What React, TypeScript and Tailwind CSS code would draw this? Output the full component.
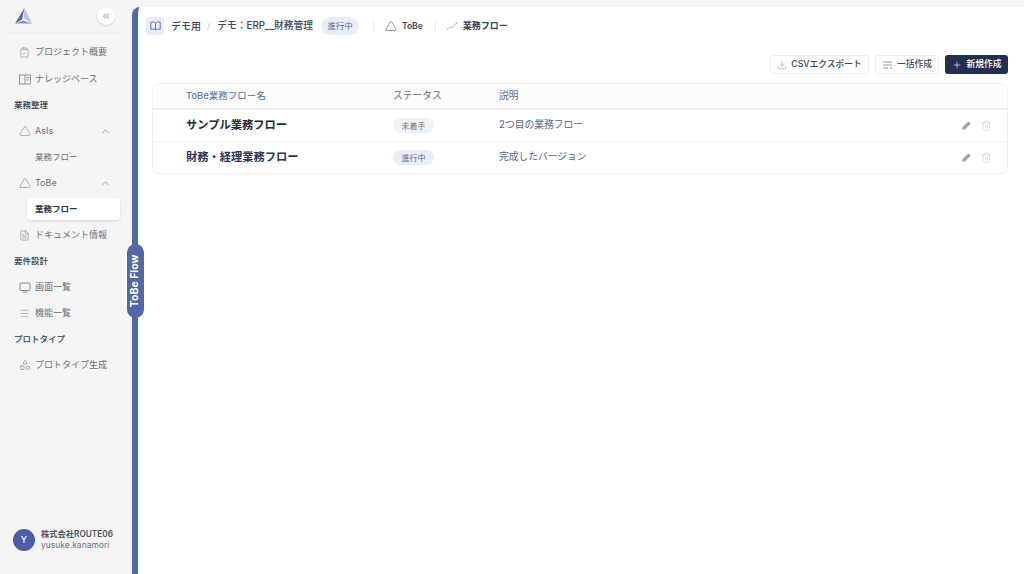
import { ChevronUp, ChevronsLeft, ClipboardCheck, Download, FileText, Menu, Plus, Shapes, Trash2, Triangle } from "lucide-react"
import type { ReactNode } from "react"

function NavItem({ icon, label, chevron }: { icon: ReactNode; label: string; chevron?: boolean }) {
  return (
    <div className="flex h-[26px] items-center pl-[19px] pr-[20px] text-[9px] text-[#6b717d]">
      <span className="flex w-[16px] shrink-0 items-center text-[#7b818c]">{icon}</span>
      <span className="whitespace-nowrap">{label}</span>
      {chevron && <ChevronUp className="ml-auto h-[13px] w-[13px] text-[#8b919b]" strokeWidth={1.5} />}
    </div>
  )
}

function SectionLabel({ label }: { label: string }) {
  return <div className="flex h-[26px] items-center pl-[14px] text-[8.5px] font-medium text-[#374151]">{label}</div>
}

function SubItem({ label, active }: { label: string; active?: boolean }) {
  if (active) {
    return (
      <div className="flex h-[26px] items-center pl-[27px] pr-[12px]">
        <div className="flex h-[22px] w-full items-center rounded-[4px] bg-white pl-[8px] text-[8.5px] font-semibold text-[#2f3542] shadow-sm">
          {label}
        </div>
      </div>
    )
  }
  return <div className="flex h-[26px] items-center pl-[35px] text-[8.5px] text-[#6b717d]">{label}</div>
}

function KnowledgeIcon() {
  return (
    <svg width="12" height="11" viewBox="0 0 12 11" fill="none" stroke="currentColor" strokeWidth="0.8">
      <rect x="0.5" y="1" width="11" height="9" />
      <path d="M6 1 V10 M7.5 3.5 H10 M7.5 6 H10" />
    </svg>
  )
}

function ScreenIcon() {
  return (
    <svg width="12" height="11" viewBox="0 0 12 11" fill="none" stroke="currentColor" strokeWidth="0.9">
      <rect x="1" y="1" width="10" height="7.5" rx="1" />
      <path d="M3.5 10 H8.5" />
    </svg>
  )
}

function Sidebar() {
  return (
    <aside className="flex h-full w-[132px] shrink-0 flex-col bg-[#f5f5f5]">
      <div className="mx-[8px] flex h-[33px] items-center justify-between border-b border-[#efefef] pl-[6px] pr-[9px]">
        <svg width="19" height="18" viewBox="0 0 19 18">
          <path d="M10.5 1 L1 16.5 L8 12.5 Z" fill="#5468a8" />
          <path d="M10.5 1 L10 11.5 L18 16.5 Z" fill="#b9c3de" />
          <path d="M1 16.5 L9 13.5 L18 16.5 Z" fill="#8495c6" />
        </svg>
        <div className="flex h-[18px] w-[18px] items-center justify-center rounded-full bg-white shadow-sm">
          <ChevronsLeft className="h-[10px] w-[10px] text-[#5f6673]" strokeWidth={1.75} />
        </div>
      </div>
      <div className="h-[6px]" />
      <NavItem icon={<ClipboardCheck className="h-[11px] w-[11px]" strokeWidth={1.25} />} label="プロジェクト概要" />
      <div className="h-[1px]" />
      <NavItem icon={<KnowledgeIcon />} label="ナレッジベース" />
      <SectionLabel label="業務整理" />
      <NavItem icon={<Triangle className="h-[12px] w-[12px]" strokeWidth={1.25} strokeDasharray="3 2" />} label="AsIs" chevron />
      <SubItem label="業務フロー" />
      <NavItem icon={<Triangle className="h-[12px] w-[12px]" strokeWidth={1.25} />} label="ToBe" chevron />
      <SubItem label="業務フロー" active />
      <NavItem icon={<FileText className="h-[11px] w-[11px]" strokeWidth={1.25} />} label="ドキュメント情報" />
      <SectionLabel label="要件設計" />
      <NavItem icon={<ScreenIcon />} label="画面一覧" />
      <NavItem icon={<Menu className="h-[11px] w-[11px]" strokeWidth={1.1} />} label="機能一覧" />
      <SectionLabel label="プロトタイプ" />
      <NavItem icon={<Shapes className="h-[12px] w-[12px]" strokeWidth={1.25} />} label="プロトタイプ生成" />
      <div className="mt-auto flex h-[45px] items-start pl-[13px]">
        <div className="flex h-[22px] w-[22px] items-center justify-center rounded-full bg-[#4a5da8] text-[9px] font-medium text-white">Y</div>
        <div className="ml-[6px] leading-[11px]">
          <div className="whitespace-nowrap text-[8.25px] font-semibold text-[#4b5563]">株式会社ROUTE06</div>
          <div className="whitespace-nowrap text-[8.5px] text-[#6b7280]">yusuke.kanamori</div>
        </div>
      </div>
    </aside>
  )
}

function MapBookIcon() {
  return (
    <svg width="11" height="10" viewBox="0 0 11 10" fill="none" stroke="#5468a8" strokeWidth="0.9">
      <path d="M5.5 2 C4.5 1 2.5 0.8 0.8 1.2 V8.3 C2.5 7.9 4.5 8.1 5.5 9 C6.5 8.1 8.5 7.9 10.2 8.3 V1.2 C8.5 0.8 6.5 1 5.5 2 Z M5.5 2 V9" />
    </svg>
  )
}

function FlowLineIcon() {
  return (
    <svg width="12" height="10" viewBox="0 0 12 10" fill="none" stroke="#9ca3af" strokeWidth="1">
      <path d="M1 8.5 L4 6 L6 7 L10 2.5" strokeDasharray="2.5 1" />
      <circle cx="10.5" cy="2" r="0.8" fill="#9ca3af" stroke="none" />
    </svg>
  )
}

function BulkIcon() {
  return (
    <svg width="11" height="10" viewBox="0 0 11 10" fill="none" stroke="#8b919b" strokeWidth="0.9" className="mr-[4px]">
      <path d="M1 2 H10 M1 5 H10 M1 8 H6 M8 8 H10" />
    </svg>
  )
}

function Breadcrumb() {
  return (
    <div className="flex h-[38px] items-center pl-[8px]">
      <div className="flex h-[18px] w-[18px] items-center justify-center rounded-[4px] bg-[#e8edf8]">
        <MapBookIcon />
      </div>
      <span className="ml-[7px] text-[10px] font-medium text-[#3f4654]">デモ用</span>
      <span className="ml-[6px] text-[9px] text-[#c3c7cf]">/</span>
      <span className="ml-[7px] whitespace-nowrap text-[9.75px] font-medium text-[#3f4654]">デモ：ERP__財務管理</span>
      <span className="ml-[8px] flex h-[18px] w-[38px] items-center justify-center rounded-full bg-[#e8edf8] text-[8.5px] text-[#5468a8]">進行中</span>
      <span className="ml-[14px] h-[12px] w-px bg-[#ececec]" />
      <Triangle className="ml-[11px] h-[12px] w-[12px] text-[#5f6673]" strokeWidth={1.25} />
      <span className="ml-[5px] text-[8.5px] font-semibold text-[#3f4654]">ToBe</span>
      <span className="ml-[12px] h-[12px] w-px bg-[#ececec]" />
      <span className="ml-[10px]"><FlowLineIcon /></span>
      <span className="ml-[5px] text-[9px] font-semibold text-[#3f4654]">業務フロー</span>
    </div>
  )
}

function Toolbar() {
  return (
    <div className="flex justify-end gap-[6px] pr-[16px] pt-[10px]">
      <button className="flex h-[19px] w-[99px] items-center justify-center rounded-[3px] border border-[#efefef] bg-white text-[8.75px] font-medium text-[#3f4654]">
        <Download className="mr-[4px] h-[10px] w-[10px] text-[#8b919b]" strokeWidth={1.25} />
        CSVエクスポート
      </button>
      <button className="flex h-[19px] w-[64px] items-center justify-center rounded-[3px] border border-[#efefef] bg-white text-[8.75px] font-medium text-[#3f4654]">
        <BulkIcon />
        一括作成
      </button>
      <button className="flex h-[19px] w-[63px] items-center justify-center rounded-[3px] bg-[#232f4f] text-[8.75px] font-medium text-white">
        <Plus className="mr-[5px] h-[10px] w-[10px]" strokeWidth={1.5} />
        新規作成
      </button>
    </div>
  )
}

function SolidPencil() {
  return (
    <svg width="11" height="11" viewBox="0 0 11 11" fill="#a1a6ae">
      <path d="M7.4 1.2 L9.8 3.6 L4 9.4 L1.2 9.8 L1.6 7 Z" />
    </svg>
  )
}

const rows = [
  { name: "サンプル業務フロー", status: "未着手", tone: "bg-[#f1f2f4] text-[#6b7280]", desc: "2つ目の業務フロー", text: "text-[#232833]", box: "h-[31px]" },
  { name: "財務・経理業務フロー", status: "進行中", tone: "bg-[#e8edf8] text-[#5468a8]", desc: "完成したバージョン", text: "text-[#2c3550]", box: "h-[32px] border-t border-[#f3f3f3]" },
]

function FlowTable() {
  return (
    <div className="ml-[14px] mr-[16px] mt-[9px] rounded-[6px] border border-[#f0f0f0] bg-white">
      <div className="grid h-[26px] grid-cols-[207px_106px_1fr] items-center border-b-2 border-[#f1f1f1] bg-[#fcfcfc] pl-[33px] text-[9.75px]">
        <span className="text-[9.5px] text-[#5468a8]">ToBe業務フロー名</span>
        <span className="text-[#6b7280]">ステータス</span>
        <span className="text-[#6b7280]">説明</span>
      </div>
      {rows.map((row) => (
        <div key={row.name} className={`grid grid-cols-[207px_106px_1fr_auto] items-center pl-[33px] pr-[15px] ${row.box}`}>
          <span className={`whitespace-nowrap text-[11.25px] font-semibold ${row.text}`}>{row.name}</span>
          <span className={`flex h-[15px] w-[41px] items-center justify-center rounded-full text-[8px] ${row.tone}`}>{row.status}</span>
          <span className="whitespace-nowrap text-[9.75px] text-[#56648f]">{row.desc}</span>
          <div className="flex items-center gap-[9px]">
            <SolidPencil />
            <Trash2 className="h-[11px] w-[11px] text-[#c9ccd2]" strokeWidth={1.25} />
          </div>
        </div>
      ))}
    </div>
  )
}

export default function App() {
  return (
    <div className="flex h-[574px] w-[1024px] overflow-hidden bg-[#f5f5f5] font-['Inter','Noto_Sans_CJK_JP',sans-serif]">
      <Sidebar />
      <main className="relative mt-[7px] flex-1 rounded-tl-[8px] border-l-[6px] border-[#5468a8] bg-white">
        <Breadcrumb />
        <Toolbar />
        <FlowTable />
        <div className="absolute left-[-11px] top-[237px] flex h-[74px] w-[17px] items-center justify-center rounded-full bg-[#5468a8]">
          <span className="rotate-[-90deg] whitespace-nowrap text-[10.5px] font-bold text-white">ToBe Flow</span>
        </div>
      </main>
    </div>
  )
}
